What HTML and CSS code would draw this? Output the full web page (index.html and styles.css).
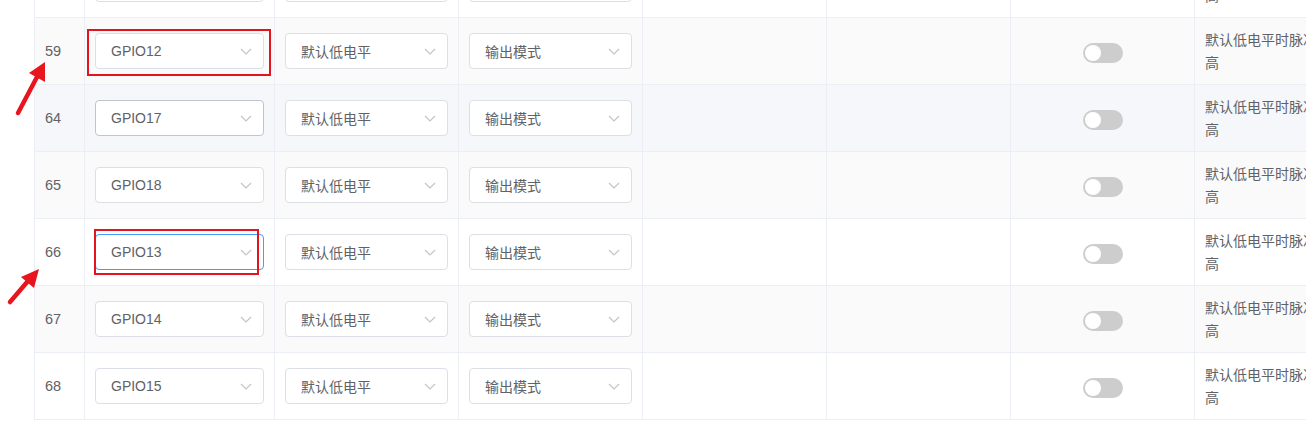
FILE: index.html
```html
<!DOCTYPE html>
<html lang="zh">
<head>
<meta charset="utf-8">
<title>GPIO</title>
<link rel="stylesheet" href="styles.css">
</head>
<body>
<div class="page">
  <div class="table">
    <div class="row">
      <div class="cell num">58</div>
      <div class="cell"><div class="select"><span>GPIO11</span><svg class="chev" viewBox="0 0 12 7"><path d="M1 1 L6 6 L11 1"/></svg></div></div>
      <div class="cell"><div class="select"><span>默认低电平</span><svg class="chev" viewBox="0 0 12 7"><path d="M1 1 L6 6 L11 1"/></svg></div></div>
      <div class="cell"><div class="select"><span>输出模式</span><svg class="chev" viewBox="0 0 12 7"><path d="M1 1 L6 6 L11 1"/></svg></div></div>
      <div class="cell"></div>
      <div class="cell"></div>
      <div class="cell center"><span class="switch"></span></div>
      <div class="cell text">默认低电平时脉冲输出为高</div>
    </div>
    <div class="row stripe">
      <div class="cell num">59</div>
      <div class="cell"><div class="select"><span>GPIO12</span><svg class="chev" viewBox="0 0 12 7"><path d="M1 1 L6 6 L11 1"/></svg></div></div>
      <div class="cell"><div class="select"><span>默认低电平</span><svg class="chev" viewBox="0 0 12 7"><path d="M1 1 L6 6 L11 1"/></svg></div></div>
      <div class="cell"><div class="select"><span>输出模式</span><svg class="chev" viewBox="0 0 12 7"><path d="M1 1 L6 6 L11 1"/></svg></div></div>
      <div class="cell"></div>
      <div class="cell"></div>
      <div class="cell center"><span class="switch"></span></div>
      <div class="cell text">默认低电平时脉冲输出为高</div>
    </div>
    <div class="row hover">
      <div class="cell num">64</div>
      <div class="cell"><div class="select hovered"><span>GPIO17</span><svg class="chev" viewBox="0 0 12 7"><path d="M1 1 L6 6 L11 1"/></svg></div></div>
      <div class="cell"><div class="select"><span>默认低电平</span><svg class="chev" viewBox="0 0 12 7"><path d="M1 1 L6 6 L11 1"/></svg></div></div>
      <div class="cell"><div class="select"><span>输出模式</span><svg class="chev" viewBox="0 0 12 7"><path d="M1 1 L6 6 L11 1"/></svg></div></div>
      <div class="cell"></div>
      <div class="cell"></div>
      <div class="cell center"><span class="switch"></span></div>
      <div class="cell text">默认低电平时脉冲输出为高</div>
    </div>
    <div class="row stripe">
      <div class="cell num">65</div>
      <div class="cell"><div class="select"><span>GPIO18</span><svg class="chev" viewBox="0 0 12 7"><path d="M1 1 L6 6 L11 1"/></svg></div></div>
      <div class="cell"><div class="select"><span>默认低电平</span><svg class="chev" viewBox="0 0 12 7"><path d="M1 1 L6 6 L11 1"/></svg></div></div>
      <div class="cell"><div class="select"><span>输出模式</span><svg class="chev" viewBox="0 0 12 7"><path d="M1 1 L6 6 L11 1"/></svg></div></div>
      <div class="cell"></div>
      <div class="cell"></div>
      <div class="cell center"><span class="switch"></span></div>
      <div class="cell text">默认低电平时脉冲输出为高</div>
    </div>
    <div class="row">
      <div class="cell num">66</div>
      <div class="cell"><div class="select focused"><span>GPIO13</span><svg class="chev" viewBox="0 0 12 7"><path d="M1 1 L6 6 L11 1"/></svg></div></div>
      <div class="cell"><div class="select"><span>默认低电平</span><svg class="chev" viewBox="0 0 12 7"><path d="M1 1 L6 6 L11 1"/></svg></div></div>
      <div class="cell"><div class="select"><span>输出模式</span><svg class="chev" viewBox="0 0 12 7"><path d="M1 1 L6 6 L11 1"/></svg></div></div>
      <div class="cell"></div>
      <div class="cell"></div>
      <div class="cell center"><span class="switch"></span></div>
      <div class="cell text">默认低电平时脉冲输出为高</div>
    </div>
    <div class="row stripe">
      <div class="cell num">67</div>
      <div class="cell"><div class="select"><span>GPIO14</span><svg class="chev" viewBox="0 0 12 7"><path d="M1 1 L6 6 L11 1"/></svg></div></div>
      <div class="cell"><div class="select"><span>默认低电平</span><svg class="chev" viewBox="0 0 12 7"><path d="M1 1 L6 6 L11 1"/></svg></div></div>
      <div class="cell"><div class="select"><span>输出模式</span><svg class="chev" viewBox="0 0 12 7"><path d="M1 1 L6 6 L11 1"/></svg></div></div>
      <div class="cell"></div>
      <div class="cell"></div>
      <div class="cell center"><span class="switch"></span></div>
      <div class="cell text">默认低电平时脉冲输出为高</div>
    </div>
    <div class="row">
      <div class="cell num">68</div>
      <div class="cell"><div class="select"><span>GPIO15</span><svg class="chev" viewBox="0 0 12 7"><path d="M1 1 L6 6 L11 1"/></svg></div></div>
      <div class="cell"><div class="select"><span>默认低电平</span><svg class="chev" viewBox="0 0 12 7"><path d="M1 1 L6 6 L11 1"/></svg></div></div>
      <div class="cell"><div class="select"><span>输出模式</span><svg class="chev" viewBox="0 0 12 7"><path d="M1 1 L6 6 L11 1"/></svg></div></div>
      <div class="cell"></div>
      <div class="cell"></div>
      <div class="cell center"><span class="switch"></span></div>
      <div class="cell text">默认低电平时脉冲输出为高</div>
    </div>
  </div>

  <div class="mark mark-1"></div>
  <div class="mark mark-2"></div>
  <svg class="arrows" width="60" height="320" viewBox="0 0 60 320">
    <line x1="18" y1="113" x2="37" y2="77" />
    <polygon points="45,62 45,82 29,73" />
    <line x1="10" y1="302" x2="28" y2="281" />
    <polygon points="39,269 34,288 21,277" />
  </svg>
</div>
</body>
</html>
```

FILE: styles.css
```css
html, body {
  margin: 0;
  padding: 0;
  background: #ffffff;
  overflow: hidden;
}

body {
  width: 1306px;
  height: 445px;
  font-family: "Liberation Sans", "Noto Sans CJK SC", sans-serif;
  font-size: 14px;
  color: #606266;
}

.page {
  position: relative;
  width: 1306px;
  height: 445px;
  overflow: hidden;
}

.table {
  margin-top: -49px;
  margin-left: 34px;
  width: 1344px;
  border-left: 1px solid #ebeef5;
}

.row {
  display: grid;
  grid-template-columns: 50px 190px 184px 184px 184px 184px 184px 184px;
  height: 67px;
  background: #ffffff;
}

.row.stripe {
  background: #fafafa;
}

.row.hover {
  background: #f5f7fa;
}

.cell {
  box-sizing: border-box;
  border-right: 1px solid #ebeef5;
  border-bottom: 1px solid #ebeef5;
  padding: 0 10px;
  display: flex;
  align-items: center;
  min-width: 0;
}

.cell.num {
  line-height: 23px;
  font-size: 14.5px;
}

.cell.center {
  justify-content: center;
}

.cell.text {
  line-height: 23px;
  padding-top: 2px;
  word-break: break-all;
}

.select {
  box-sizing: border-box;
  width: 100%;
  height: 36px;
  border: 1px solid #dcdfe6;
  border-radius: 4px;
  background: #ffffff;
  display: flex;
  align-items: center;
  padding: 0 11px 0 15px;
}

.select span {
  flex: 1;
  white-space: nowrap;
}

.select.hovered {
  border-color: #c0c4cc;
}

.select.focused {
  border-color: #409eff;
}

.chev {
  width: 12px;
  height: 7px;
  fill: none;
  stroke: #c0c4cc;
  stroke-width: 1.2;
}

.switch {
  position: relative;
  display: block;
  width: 40px;
  height: 20px;
  margin-top: 4px;
  border-radius: 10px;
  background: #cdcdcd;
}

.switch::after {
  content: "";
  position: absolute;
  left: 2px;
  top: 2px;
  width: 16px;
  height: 16px;
  border-radius: 50%;
  background: #ffffff;
}

.mark {
  position: absolute;
  box-sizing: border-box;
  border: 2px solid #e3141d;
}

.mark-1 {
  left: 87px;
  top: 29px;
  width: 184px;
  height: 47px;
}

.mark-2 {
  left: 94px;
  top: 229px;
  width: 165px;
  height: 46px;
}

.arrows {
  position: absolute;
  left: 0;
  top: 0;
}

.arrows line {
  stroke: #e8141e;
  stroke-width: 4.5;
  stroke-linecap: round;
}

.arrows polygon {
  fill: #e8141e;
}
```
